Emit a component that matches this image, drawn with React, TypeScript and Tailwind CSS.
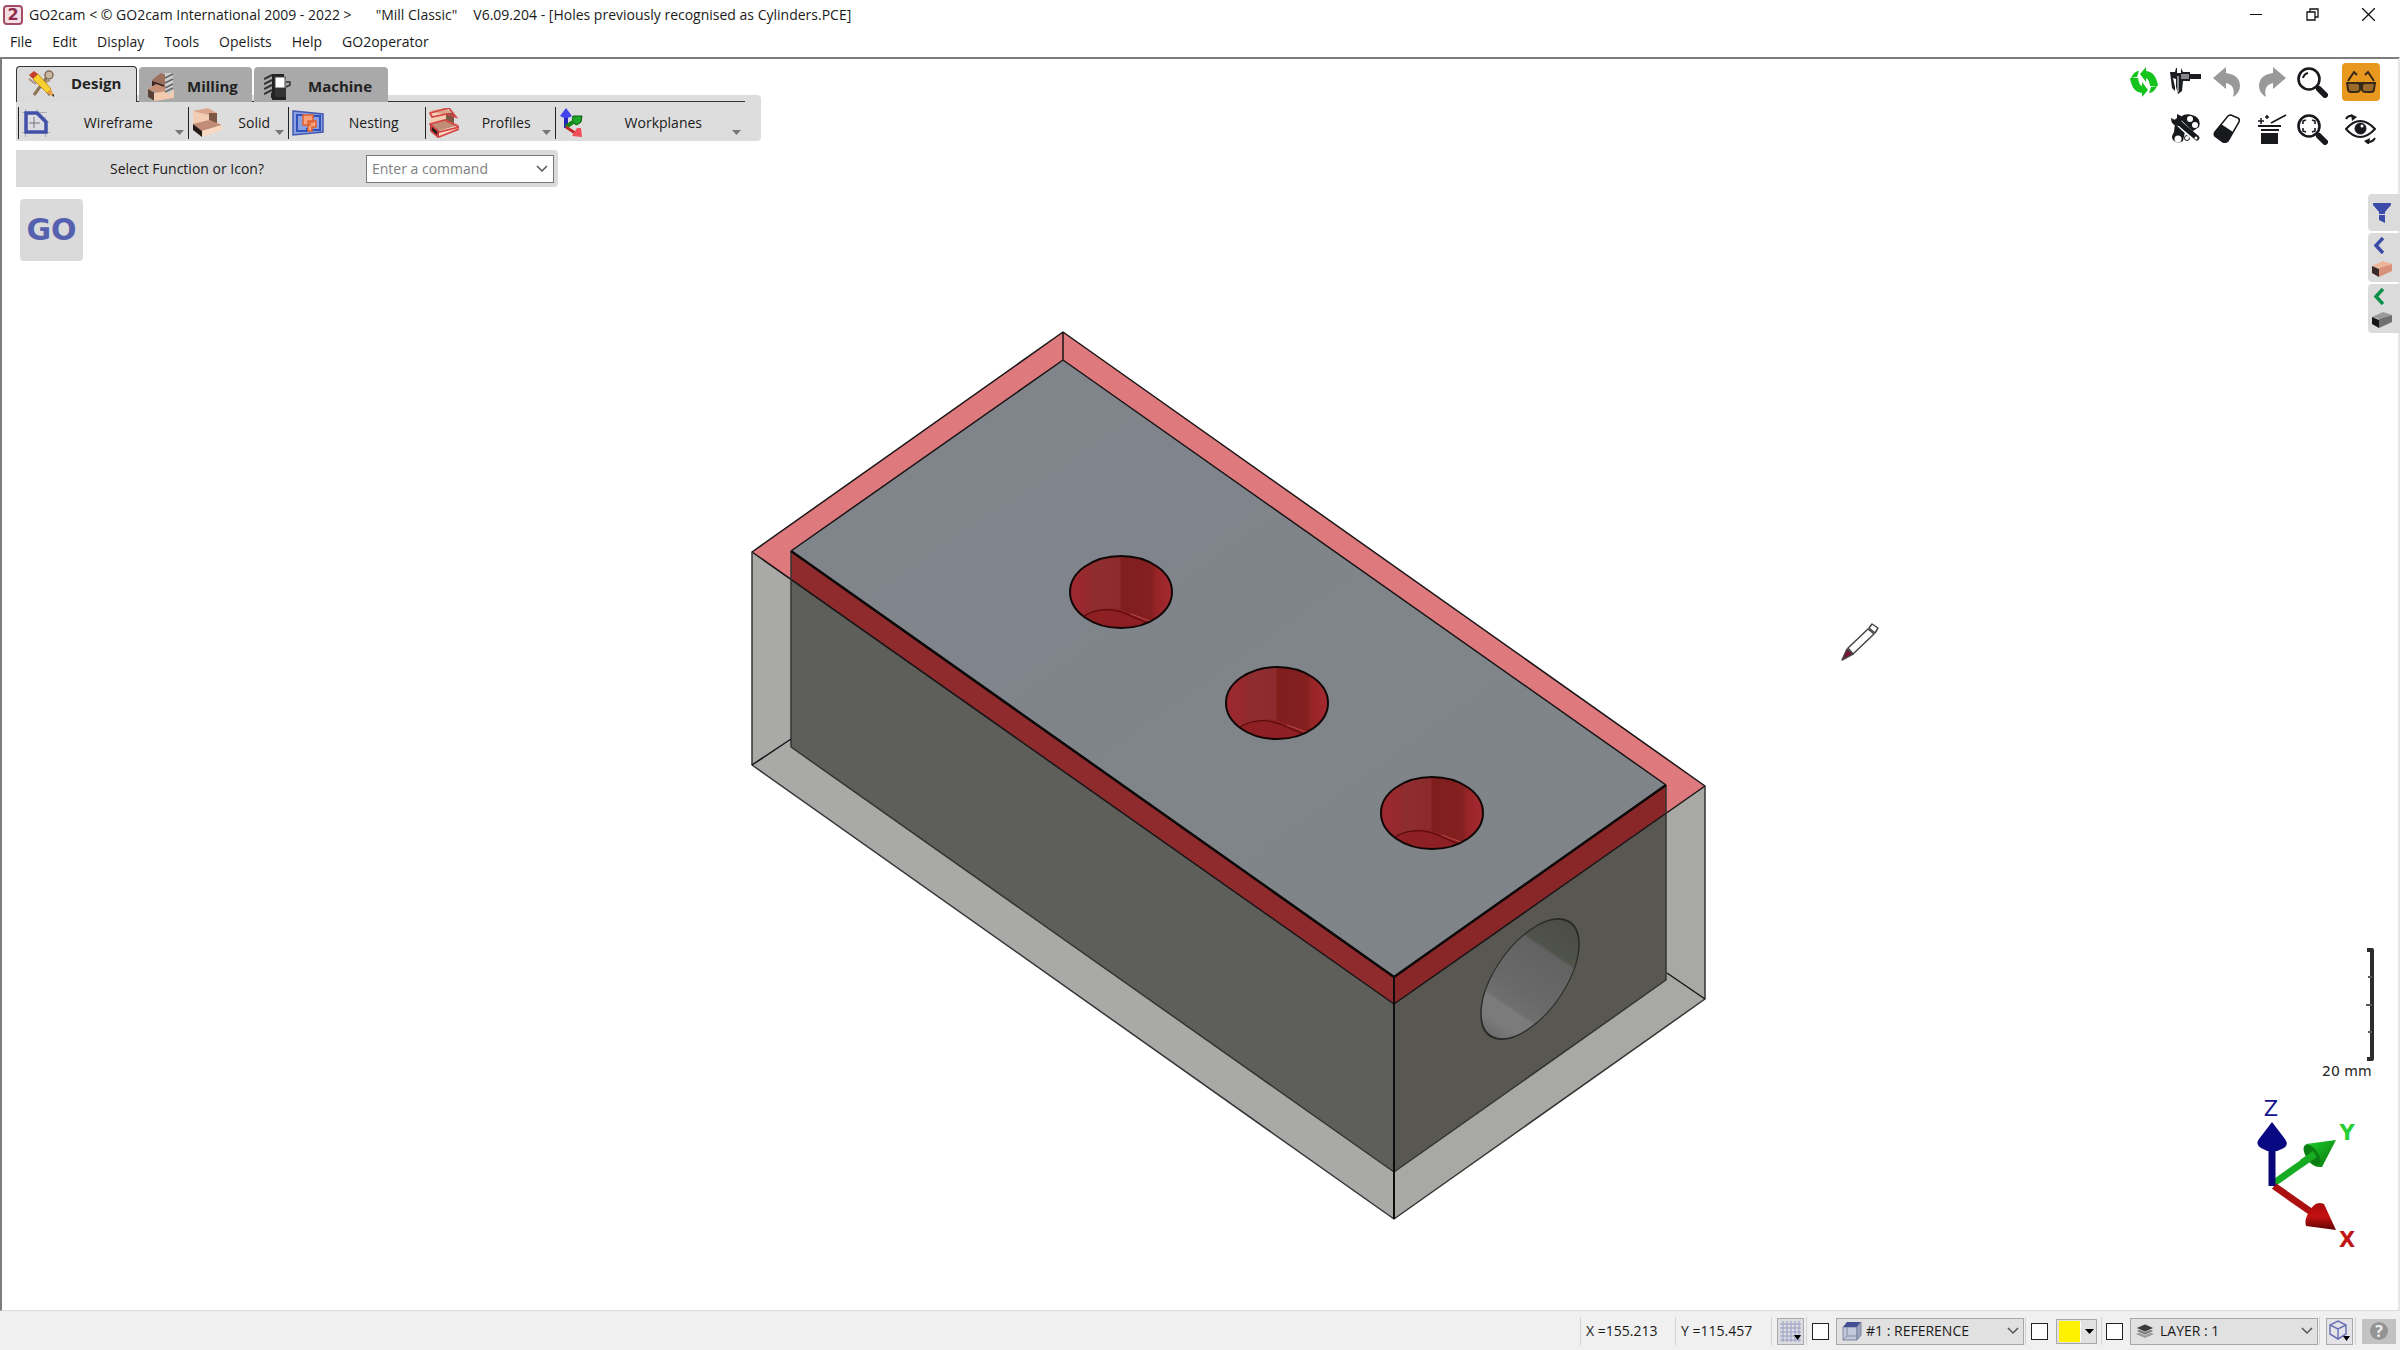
import type { ReactNode } from 'react';

const menus = ['File', 'Edit', 'Display', 'Tools', 'Opelists', 'Help', 'GO2operator'];

const holes = [
  { x: 1121, y: 592 },
  { x: 1277, y: 703 },
  { x: 1432, y: 813 },
];

const PencilCompassIcon = () => (
  <svg className="h-7 w-7" viewBox="0 0 28 28">
    <path d="M23 3 7 25M13 12l10 13" stroke="#8b7355" strokeWidth="3" />
    <circle cx="22" cy="5" r="4" fill="#c8b8a4" stroke="#806a58" strokeWidth="1.5" />
    <path d="M2 9l7 5M15 14l8-4" stroke="#a4907c" strokeWidth="2" />
    <path d="m2 5 5-4 4 3-5 5z" fill="#c4402c" />
    <path d="m6 9 5-5 13 15-4 4z" fill="#f8d030" stroke="#c8921c" strokeWidth="1" />
    <path d="m20 23 4-4 3 8z" fill="#e8a040" />
    <path d="m25 25 2 2v-3z" fill="#222" />
  </svg>
);

const SolidIcon = ({ outline = false }: { outline?: boolean }) => (
  <svg className="h-[30px] w-[30px]" viewBox="0 0 30 30">
    <path d="m1 3 15-2 2 12L1 16z" fill="#f3cdb4" />
    <path d="m1 3 15-3 9 5-8 2z" fill="#dba68c" />
    <path d="m17 5 8 0v11l-8-4z" fill="#7d5847" />
    <path d="m1 16 16-4 13 5-20 6z" fill="#c18d76" />
    <path d="m1 16 9 7v6L1 22z" fill="#241a16" />
    <path d="m10 23 20-6v5l-20 7z" fill="#f8d8c2" />
    {outline && (
      <path d="m1 5 19-5 7 9-9-3-15 3zM1 16l15-4 14 7-20 5zM2 17v6l7 6v-5M10 29l20-8" fill="none" stroke="#d44444" strokeWidth="1.700" />
    )}
  </svg>
);

const MillingIcon = () => (
  <svg className="h-[30px] w-7" viewBox="0 0 28 30">
    <path d="m5 8 9-7 8 4v14L5 12z" fill="#9c705c" />
    <path d="m5 9 12 4v6L5 14z" fill="#3a2822" />
    <path d="m1 17 8-5 17 6-9 5z" fill="#c79076" />
    <path d="m1 17 7 4v8l-7-4z" fill="#5d4035" />
    <path d="m7 21 20-3v8L7 29z" fill="#f4caae" />
    <path d="M18 1h8v18l-4 4-4-4z" fill="#cfcfcf" />
    <path d="m18 6 8-4m-8 9 8-4m-8 9 8-4m-8 8 8-4" stroke="#666" strokeWidth="1.800" />
  </svg>
);

const MachineIcon = () => (
  <svg className="h-7 w-7" viewBox="0 0 28 28">
    <path d="M2 1h18v3H2zM7 1h4v24H7zM8 22h14v5H8z" fill="#222" />
    <path d="M0 1h8v18l-4 5-4-5z" fill="#aaa" />
    <path d="m0 6 8-4m-8 9 8-4m-8 9 8-4m-8 9 8-4" stroke="#333" strokeWidth="2" />
    <rect x="11" y="4" width="10" height="11" fill="#fff" stroke="#444" />
    <path d="M11 15h11v9H11z" fill="#333" />
    <path d="M22 9h4v3l-4 2" fill="none" stroke="#333" strokeWidth="1.5" />
  </svg>
);

const WireframeIcon = () => (
  <svg className="h-7 w-7" viewBox="0 0 28 28">
    <path d="M0 3.500h25M0 23.500h28M3.500 0v28M23.500 8v20M14 0l13 14" stroke="#aab" strokeWidth="1" fill="none" />
    <path d="M4 4h11l9 9v10H4z" fill="#dcdde4" stroke="#4250a8" strokeWidth="3.500" />
    <path d="M7 14h11M12 8v11" stroke="#777" strokeWidth="1" />
  </svg>
);

const NestingIcon = () => (
  <svg className="h-[26px] w-8" viewBox="0 0 32 26">
    <path d="m1 1 30 3v18L1 25z" fill="#8aa0e4" stroke="#4359b0" strokeWidth="1.500" />
    <path d="M12 5H5v16h10v-3M20 6h8v14h-8" fill="none" stroke="#3152bb" strokeWidth="2" />
    <path d="M11 5h10v7h-3v3h-7zM16 11h8v6h-4v4h-4z" fill="#f6a27c" stroke="#e0602e" strokeWidth="1.500" />
  </svg>
);

const WorkplanesIcon = () => (
  <svg className="h-[30px] w-6" viewBox="0 0 24 30">
    <path d="M7 8v12" stroke="#2525c0" strokeWidth="4" />
    <path d="M7 0 1 8q6 4 12 0z" fill="#4444ee" />
    <path d="m7 19 7-5" stroke="#128a12" strokeWidth="4" />
    <path d="m23 8-9 0q-2 5 3 9 3-1 5-3z" fill="#1ca628" stroke="#0a5a10" />
    <path d="m7 19 9 6" stroke="#c02c2c" strokeWidth="3" />
    <path d="m23 29-1-9-4 0-5 8z" fill="#ef4f58" />
  </svg>
);

const RefreshIcon = () => (
  <svg className="h-[30px] w-[30px]" viewBox="0 0 30 30" fill="#14c41c">
    <path d="M11 7 17 0v4q10 1 12 15h-8q-1-7-4-8v4z" />
    <path d="m19 23-6 7v-4Q3 25 1 11h8q1 7 4 8v-4z" />
    <path d="M3 9q3-5 7-5L8 10 2 11zM27 21q-3 5-7 5l2-6 6-1z" />
  </svg>
);

const CaliperIcon = () => (
  <svg className="h-[30px] w-[31px]" viewBox="0 0 31 30" fill="#1b1d20">
    <path d="M0 5h5l1-4h1v5h4V1l2 4h7v9h-7l-1 10-4 3-2-7V12l-3-1 2 9v4l-3-3z" />
    <path d="M19 7h12v5H19z" />
    <path d="M11 7h8v5h-8z" fill="#888" />
    <path d="M8 9v16" stroke="#fff" />
  </svg>
);

const ArrowIcon = ({ flip = false }: { flip?: boolean }) => (
  <svg className={`h-[30px] w-7 ${flip ? '-scale-x-100' : ''}`} viewBox="0 0 28 30" fill="#999">
    <path d="M0 11 13 0v6q14 2 14 13 0 7-7 11 3-12-7-14v6z" />
  </svg>
);

const MagnifierIcon = ({ fit = false }: { fit?: boolean }) => (
  <svg className="h-[31px] w-[31px]" viewBox="0 0 31 31" fill="none" stroke="#17191c">
    <circle cx="12" cy="12" r="10.500" strokeWidth="2.600" />
    <path d="m19 19 3 3" strokeWidth="3" />
    <path d="m22 22 6 6" strokeWidth="6" strokeLinecap="round" />
    {fit ? (
      <path d="M6 10V7l3-1M15 6l3 1v3M18 14v3l-3 1M9 18l-3-1v-3" strokeWidth="1.600" />
    ) : (
      <path d="M6 11q1-4 5-5" strokeWidth="2" />
    )}
  </svg>
);

const GlassesIcon = () => (
  <svg className="h-6 w-[30px]" viewBox="0 0 30 24" fill="none" stroke="#352817">
    <path d="M2 11 8 2l3 3M28 11l-6-9-3 3" strokeWidth="2" />
    <path d="M1 13h13v6q0 3-4 3H5q-3 0-3-3zM16 13h13l-1 6q0 3-3 3h-5q-4 0-4-3z" fill="#9c6a2a" strokeWidth="2" />
    <path d="M12 13.500h6" strokeWidth="3" />
  </svg>
);

const SettingsIcon = () => (
  <svg className="h-[30px] w-[31px]" viewBox="0 0 31 30">
    <path d="M5 9Q12-2 22 1t7 12l-6 4-8 1-2 9q-5 3-9 0t0-9z" fill="#17191c" />
    <circle cx="20" cy="5" r="3" fill="#fff" />
    <circle cx="25" cy="11" r="3" fill="#fff" />
    <circle cx="8" cy="25" r="3.500" fill="#fff" />
    <circle cx="17" cy="24" r="2.500" fill="#fff" stroke="#17191c" />
    <path d="m7 7 19 18" stroke="#fff" strokeWidth="7" strokeLinecap="round" />
    <path d="m7 7 20 17" stroke="#17191c" strokeWidth="5" strokeLinecap="round" />
    <path d="M1 4q0 8 8 8 4-4 2-10l-4-2v6H5z" fill="#17191c" />
    <circle cx="26" cy="24" r="1.500" fill="#fff" />
  </svg>
);

const EraserIcon = () => (
  <svg className="h-[30px] w-7" viewBox="0 0 28 30">
    <path d="M15 2q1-1 3-1l7 3q2 1 1 4L15 27q-2 2-5 1l-7-5q-3-2-1-5z" fill="#fff" stroke="#17191c" strokeWidth="1.500" />
    <path d="m8 10 12 8-5 9q-2 2-5 1l-7-5q-3-2-1-5z" fill="#17191c" />
  </svg>
);

const MagicIcon = () => (
  <svg className="h-[30px] w-[30px]" viewBox="0 0 30 30" fill="#17191c">
    <path d="M1 11h23v2H1zM4 15h18v2H4zM4 19h17v11H4z" />
    <path d="m14 9 15-8" stroke="#17191c" strokeWidth="1.800" />
    <path d="M4 4v6M1 7h6M10 1v4M8 3h4" stroke="#17191c" strokeWidth="1.500" />
  </svg>
);

const EyeIcon = () => (
  <svg className="h-[30px] w-[31px]" viewBox="0 0 31 30" fill="none" stroke="#17191c">
    <path d="M1 15Q15-1 30 15 15 31 1 15z" strokeWidth="2" />
    <circle cx="15.500" cy="14.500" r="5.500" fill="#17191c" />
    <circle cx="17" cy="12" r="1.500" fill="#fff" stroke="none" />
    <path d="M1 5q2-4 7-3M30 24q-2 4-7 4" strokeWidth="2" />
    <path d="m6 0 6 3-5 4zM25 24l-6 3 5 4z" fill="#17191c" stroke="none" />
  </svg>
);

const Chevron = () => (
  <svg className="pointer-events-none h-2 w-3" viewBox="0 0 12 8" fill="none" stroke="#555" strokeWidth="1.500">
    <path d="m1 1 5 5 5-5" />
  </svg>
);

const BlockIcon = ({ top, left, front }: { top: string; left: string; front: string }) => (
  <svg className="h-[18px] w-[22px]" viewBox="0 0 22 18">
    <path d="m1 6 11-5 9 3-13 4z" fill={top} />
    <path d="m1 6 7 3v8l-7-4z" fill={left} />
    <path d="m8 8 13-4v7L8 17z" fill={front} />
  </svg>
);

const CubeIcon = () => (
  <svg className="h-5 w-5" viewBox="0 0 20 20">
    <path d="M1 6h14v13H1z" fill="#c4c8dc" stroke="#7d849f" />
    <path d="M1 6 5 1h14l-4 5z" fill="#444f95" />
    <path d="m15 6 4-5v13l-4 5z" fill="#9ca3bd" stroke="#7d849f" />
    <path d="M5 6v9h10M5 15l-4 4" fill="none" stroke="#858ca6" />
  </svg>
);

interface ToolItem {
  label: string;
  icon: ReactNode;
  width: string;
  arrow: boolean;
}

const tools: ToolItem[] = [
  { label: 'Wireframe', icon: <WireframeIcon />, width: 'w-[171px]', arrow: true },
  { label: 'Solid', icon: <SolidIcon />, width: 'w-[101px]', arrow: true },
  { label: 'Nesting', icon: <NestingIcon />, width: 'w-[138px]', arrow: false },
  { label: 'Profiles', icon: <SolidIcon outline />, width: 'w-[131px]', arrow: true },
  { label: 'Workplanes', icon: <WorkplanesIcon />, width: 'w-[192px]', arrow: true },
];

const viewTools: { label: string; icon: ReactNode; style?: string }[] = [
  { label: 'Refresh', icon: <RefreshIcon /> },
  { label: 'Measure', icon: <CaliperIcon /> },
  { label: 'Undo', icon: <ArrowIcon /> },
  { label: 'Redo', icon: <ArrowIcon flip /> },
  { label: 'Zoom', icon: <MagnifierIcon /> },
  { label: 'Visibility', icon: <GlassesIcon />, style: 'w-[38px] rounded-sm bg-[#e8981e]' },
  { label: 'Settings', icon: <SettingsIcon />, style: 'col-start-2' },
  { label: 'Delete', icon: <EraserIcon /> },
  { label: 'Magic', icon: <MagicIcon /> },
  { label: 'Zoom all', icon: <MagnifierIcon fit /> },
  { label: 'Views', icon: <EyeIcon /> },
];

function Viewport() {
  return (
    <svg className="absolute inset-0 h-full w-full" viewBox="2 59 2396 1251" strokeLinejoin="round">
      <defs>
        <linearGradient id="bore">
          <stop offset="0" stopColor="#a02831" />
          <stop offset=".21" stopColor="#922a2d" />
          <stop offset=".22" stopColor="#8f2e30" />
          <stop offset=".49" stopColor="#8c2b2d" />
          <stop offset=".5" stopColor="#7f1e1d" />
          <stop offset=".8" stopColor="#84201f" />
          <stop offset=".84" stopColor="#962427" />
          <stop offset="1" stopColor="#a52a31" />
        </linearGradient>
        <linearGradient id="face" x1="0" y1="0" x2="1" y2="1">
          <stop offset="0" stopColor="#80858a" />
          <stop offset=".35" stopColor="#80848c" />
          <stop offset=".55" stopColor="#7f8588" />
          <stop offset="1" stopColor="#80848b" />
        </linearGradient>
        <linearGradient id="cross" gradientUnits="userSpaceOnUse" x1="40" y1="-29" x2="-40" y2="29">
          <stop offset="0" stopColor="#4b4d46" />
          <stop offset=".25" stopColor="#50534a" />
          <stop offset=".27" stopColor="#626262" />
          <stop offset=".6" stopColor="#696969" />
          <stop offset=".74" stopColor="#6f6f6f" />
          <stop offset=".76" stopColor="#7b7b7b" />
          <stop offset=".88" stopColor="#7b7b7b" />
          <stop offset="1" stopColor="#6c6c6c" />
        </linearGradient>
        <linearGradient id="coneY" x1="0" y1="0" x2="1" y2="1">
          <stop offset="0" stopColor="#21d32d" />
          <stop offset="1" stopColor="#08720e" />
        </linearGradient>
        <linearGradient id="coneX" x1="0" y1="0" x2="0" y2="1">
          <stop offset="0" stopColor="#a80c0c" />
          <stop offset=".5" stopColor="#c31010" />
          <stop offset="1" stopColor="#5f0404" />
        </linearGradient>
      </defs>

      {/* stock */}
      <path d="M752 552 1394 1004V1219L752 765z" fill="#a9a9a8" />
      <path d="M1394 1004 1705 786V999L1394 1219z" fill="#a8a8a5" />
      <path d="M1063 332 1705 786 1394 1004 752 552z" fill="#de797d" />

      {/* part */}
      <path d="M791 551 1394 977V1172L791 747z" fill="#5e5e5b" />
      <path d="M1394 977 1666 785V980L1394 1172z" fill="#595751" />
      <path d="M791 551 1394 977V1004L791 579z" fill="#8f2a2d" />
      <path d="M1394 977 1666 785V813L1394 1004z" fill="#882628" />
      <path d="M1063 360 1666 785 1394 977 791 551z" fill="url(#face)" />

      <g fill="none" stroke="#191516" strokeWidth="1.500">
        <path d="M1063 332 1705 786 1394 1004 752 552zM1063 332v28L1666 785M1063 360 791 551" />
        <path d="M752 552V765L1394 1219 1705 999V786M791 551V747L1394 1172 1666 980V785" stroke="#343434" />
        <path d="m752 765 39-26M1705 999l-38-26" />
        <path d="M791 551 1394 977 1666 785" stroke="#0c0808" strokeWidth="2.500" />
        <path d="M1394 977V1219" stroke="#0c0c0c" strokeWidth="2" />
      </g>

      {holes.map((hole) => (
        <g key={hole.x} transform={`translate(${hole.x} ${hole.y})`}>
          <ellipse rx="51" ry="36" fill="url(#bore)" />
          <path d="M-37 25Q-10 8 15 24L28 29Q-4 45-37 25z" fill="#8e1f22" />
          <path d="M-37 24C-20 14-4 17 10 24L26 31" fill="none" stroke="#5c0b0d" strokeWidth="1.200" />
          <path d="m10 22 19 7" stroke="#b5494a" />
          <ellipse rx="51" ry="36" fill="none" stroke="#100606" strokeWidth="2" />
        </g>
      ))}

      <circle r="49" transform="matrix(1 -.707 0 1 1530 979)" fill="url(#cross)" stroke="#2a2b28" strokeWidth="1.500" />

      {/* pencil cursor */}
      <g fill="#fff" stroke="#444" strokeWidth="1.500">
        <path d="m1848 648 20-19 6 5-21 20z" />
        <path d="m1869 628 3-4 6 4-3 5z" />
        <path d="m1842 660 5-11 6 5z" fill="#7c1230" />
      </g>

      {/* scale */}
      <path d="M2367 950h5v109h-5" fill="none" stroke="#2c2c2c" strokeWidth="4" />
      <path d="M2368 977h4M2366 1005h6M2368 1032h4" stroke="#555" strokeWidth="2" />
      <text x="2322" y="1076" fontSize="14" fill="#222" className="font-[DejaVu_Sans,sans-serif]">20 mm</text>

      {/* axis triad */}
      <path d="m2274 1183 40-28" stroke="#16ab20" strokeWidth="7" />
      <path d="M2336 1140 2306 1144Q2303 1152 2308 1160T2322 1167z" fill="url(#coneY)" />
      <ellipse cx="2312" cy="1155" rx="6" ry="12" transform="rotate(-35 2312 1155)" fill="#0b7d13" />
      <path d="m2302 1163 13-9" stroke="#16ab20" strokeWidth="7" />
      <path d="m2274 1186 40 28" stroke="#ad1010" strokeWidth="7" />
      <path d="M2336 1230 2324 1204Q2315 1200 2309 1212 2304 1220 2306 1226z" fill="url(#coneX)" />
      <path d="M2272 1147v39" stroke="#080878" strokeWidth="7" />
      <path d="m2272 1122 13 17q4 6-1 9-12 7-23 0-6-4-2-9z" fill="#080882" />
      <g fontSize="21" className="font-[DejaVu_Sans,sans-serif]" textAnchor="middle">
        <text x="2271" y="1116" fill="#12128c">Z</text>
        <text x="2347" y="1140" fill="#28cf35" fontWeight="bold">Y</text>
        <text x="2347" y="1247" fill="#c01616" fontWeight="bold">X</text>
      </g>
    </svg>
  );
}

function TitleBar() {
  return (
    <header className="bg-white">
      <div className="flex h-[29px] items-center pl-[3px]">
        <span className="flex size-5 items-center justify-center rounded border-2 border-[#a34c66] bg-[#f4dfe5] font-[DejaVu_Sans,sans-serif] text-base leading-4 font-bold text-[#8d2c4c]">2</span>
        <h1 className="ml-1.5 flex whitespace-pre">
          <span>GO2cam &lt; © GO2cam International 2009 - 2022 &gt;</span>
          <span className="ml-6">"Mill Classic"</span>
          <span className="ml-4">V6.09.204 - [Holes previously recognised as Cylinders.PCE]</span>
        </h1>
        <div className="ml-auto flex pr-1">
          <button aria-label="Minimize" className="flex h-7 w-14 items-center justify-center">
            <svg className="size-3" viewBox="0 0 12 12"><path d="M0 5.500h12" stroke="#111" /></svg>
          </button>
          <button aria-label="Restore" className="flex h-7 w-14 items-center justify-center">
            <svg className="size-[13px]" viewBox="0 0 13 13" fill="none" stroke="#111" strokeWidth="1.300"><path d="M1 4h8v8H1zM4 4V1h8v8H9" /></svg>
          </button>
          <button aria-label="Close" className="flex h-7 w-14 items-center justify-center">
            <svg className="size-[13px]" viewBox="0 0 13 13" stroke="#111" strokeWidth="1.300"><path d="m0 0 13 13M13 0 0 13" /></svg>
          </button>
        </div>
      </div>
      <nav className="flex h-7 items-center gap-5 pb-0.5 pl-2.5">
        {menus.map((menu) => (
          <button key={menu}>{menu}</button>
        ))}
      </nav>
    </header>
  );
}

function Ribbon() {
  return (
    <div className="w-[745px]">
      <div className="relative z-10 flex h-9 items-end gap-0.5 text-[15px] font-bold text-[#222]" role="tablist">
        <button role="tab" aria-selected="true" className="flex h-full w-[121px] items-center gap-4 rounded-t border border-b-0 border-[#333] bg-[#dcdbdc] pb-0.5 pl-2.5">
          <PencilCompassIcon />
          Design
        </button>
        <button role="tab" aria-selected="false" className="flex h-[35px] w-[113px] items-center gap-3 rounded-t bg-[#a9a9a9] pt-1 pl-2">
          <MillingIcon />
          Milling
        </button>
        <button role="tab" aria-selected="false" className="flex h-[35px] w-[134px] items-center gap-4 rounded-t bg-[#a9a9a9] pt-1 pl-2.5">
          <MachineIcon />
          Machine
        </button>
      </div>
      <div className="-mt-[7px] h-[46px] rounded-r bg-[#dedddd] pt-1.5 pr-4">
        <div className="ml-[121px] h-px bg-[#333]" />
        <div className="mt-[5px] ml-0.5 flex h-8">
          {tools.map((tool) => (
            <button key={tool.label} className={`flex items-center border-l border-[#222] pl-[3px] ${tool.width}`}>
              {tool.icon}
              <span className="flex-1 pl-3 text-center">{tool.label}</span>
              <svg className={`mr-1 mb-1 h-[5px] w-[9px] self-end ${tool.arrow ? '' : 'invisible'}`} viewBox="0 0 9 5">
                <path d="M0 0h9L4.500 5z" fill="#777" />
              </svg>
            </button>
          ))}
        </div>
      </div>
    </div>
  );
}

function SidePanel() {
  return (
    <div className="-mr-0.5 flex w-8 flex-col gap-0.5">
      <button aria-label="Filter" className="flex h-[37px] items-center justify-center rounded-l-sm bg-[#dcdbdc] pr-1">
        <svg className="h-5 w-[18px]" viewBox="0 0 18 20" fill="#3c4ba8"><path d="M0 0h18v2l-6 7v2H6V9L0 2zM6 12h6v8l-6-3z" /></svg>
      </button>
      <button aria-label="Part" className="flex h-[49px] flex-col items-center gap-1.5 rounded-l-sm bg-[#dcdbdc] pt-1 pr-1">
        <svg className="mr-2 h-[17px] w-[11px]" viewBox="0 0 11 17" fill="none" stroke="#3c4ba8" strokeWidth="3.500"><path d="M10 1 3 8.500 10 16" /></svg>
        <BlockIcon top="#f0b498" left="#3c2a24" front="#d8917a" />
      </button>
      <button aria-label="Stock" className="flex h-[49px] flex-col items-center gap-1.5 rounded-l-sm bg-[#dcdbdc] pt-1 pr-1">
        <svg className="mr-2 h-[17px] w-[11px]" viewBox="0 0 11 17" fill="none" stroke="#0c9048" strokeWidth="3.500"><path d="M10 1 3 8.500 10 16" /></svg>
        <BlockIcon top="#9a9a9a" left="#161616" front="#707070" />
      </button>
    </div>
  );
}

const Checkbox = ({ label }: { label: string }) => (
  <input type="checkbox" aria-label={label} className="size-[17px] shrink-0 appearance-none border border-[#222] bg-white" />
);

const StatusSelect = ({ label, value, icon }: { label: string; value: string; icon: ReactNode }) => (
  <div className="relative flex items-center">
    <span className="pointer-events-none absolute left-1.5">{icon}</span>
    <select aria-label={label} className="h-[27px] w-[188px] appearance-none border border-[#a8a8a8] bg-[#e1e1e1] pl-[29px] whitespace-pre">
      <option>{value}</option>
    </select>
    <span className="pointer-events-none absolute right-[5px]">
      <Chevron />
    </span>
  </div>
);

function StatusBar() {
  return (
    <footer className="flex h-[39px] items-center justify-end bg-[#f0f0f0] pt-px pr-1">
      <div className="flex h-7 w-[95px] items-center border-l border-[#d4d4d4] pl-[5px]">X =155.213</div>
      <div className="flex h-7 w-24 items-center border-l border-[#d4d4d4] pl-[5px]">Y =115.457</div>
      <div className="flex h-7 w-[35px] items-center border-l border-[#d4d4d4] pl-[5px]">
        <button aria-label="Grid" className="border border-[#aaa] bg-[#dcdce0] p-px">
          <svg className="size-[23px]" viewBox="0 0 23 23">
            <path d="M4 1v21M8 1v21M12 1v21M16 1v21M20 1v21M1 4h21M1 8h21M1 12h21M1 16h21M1 20h21" stroke="#979dc4" />
            <path d="M15 15h7l-3.500 5z" />
          </svg>
        </button>
      </div>
      <div className="flex h-7 w-[219px] items-center gap-[7px] border-l border-[#d4d4d4] pl-[5px]">
        <Checkbox label="Lock workplane" />
        <StatusSelect label="Workplane" value="#1 : REFERENCE" icon={<CubeIcon />} />
      </div>
      <div className="flex h-7 w-[76px] items-center gap-2 border-l border-[#d4d4d4] pl-[5px]">
        <Checkbox label="Lock color" />
        <button aria-label="Color" className="flex h-[25px] w-[41px] items-center border border-[#a8a8a8] bg-[#e1e1e1] pl-0.5">
          <span className="h-[21px] w-[22px] border-r border-white bg-[#fff200]" />
          <svg className="ml-1 h-[5px] w-[9px]" viewBox="0 0 9 5"><path d="M0 0h9L4.500 5z" /></svg>
        </button>
      </div>
      <div className="flex h-7 w-[218px] items-center gap-[7px] border-l border-[#d4d4d4] pl-1">
        <Checkbox label="Lock layer" />
        <StatusSelect
          label="Layer"
          value="LAYER :  1"
          icon={
            <svg className="h-4 w-[18px]" viewBox="0 0 18 16">
              <path d="m0 11 9 4 9-4-9-4z" fill="#9a9a9a" />
              <path d="m0 8 9 4 9-4-9-4z" fill="#777" stroke="#e1e1e1" strokeWidth=".8" />
              <path d="m0 5 9 4 9-4-9-4z" fill="#3c3c3c" stroke="#e1e1e1" strokeWidth=".8" />
            </svg>
          }
        />
      </div>
      <div className="flex h-7 w-9 items-center border-l border-[#d4d4d4] pl-1.5">
        <button aria-label="Display mode" className="border border-[#aaa] bg-[#e4e4e8] p-px">
          <svg className="size-[23px]" viewBox="0 0 23 23" fill="none" stroke="#6b73b5" strokeWidth="1.500">
            <path d="m10 1 8 4v9l-8 5-8-5V5zM2 5l8 4 8-4M10 9v10" />
            <path d="M15 16h7l-3.500 5z" fill="#000" stroke="none" />
          </svg>
        </button>
      </div>
      <div className="flex h-7 items-center border-l border-[#d4d4d4] pl-1.5">
        <button aria-label="Help" className="flex h-[25px] w-[34px] items-center justify-center bg-[#c2c2c2]">
          <span className="flex size-[18px] items-center justify-center rounded-full bg-[#949494] text-base leading-4 font-bold text-[#eee]">?</span>
        </button>
      </div>
    </footer>
  );
}

export default function App() {
  return (
    <div className="flex min-h-screen flex-col bg-white font-[Open_Sans,sans-serif] text-sm text-[#1a1a1a]">
      <TitleBar />
      <main className="relative flex-1 border-t-2 border-r-2 border-b border-l-2 border-t-[#7d7d7d] border-r-[#e6e6e6] border-b-[#dcdcdc] border-l-[#7d7d7d]">
        <Viewport />
        <div className="relative flex justify-between">
          <div className="pt-[7px] pl-3.5">
            <Ribbon />
            <div className="mt-[9px] flex h-[37px] w-[542px] items-center rounded-r bg-[#dbdadb] pt-px pr-1">
              <label htmlFor="command" className="flex-1 pr-2 text-center">Select Function or Icon?</label>
              <div className="flex h-7 w-[188px] items-center border border-[#777] bg-white pr-[5px]">
                <input id="command" placeholder="Enter a command" className="min-w-0 flex-1 pl-[5px] placeholder:text-[#808080]" />
                <Chevron />
              </div>
            </div>
            <button className="mt-3 ml-1 flex h-[62px] w-[63px] items-center justify-center rounded-sm bg-[#dbdadb] font-[DejaVu_Sans,sans-serif] text-3xl font-bold text-[#5560ae]">
              GO
            </button>
          </div>
          <div className="flex flex-col items-end gap-[46px] pt-1">
            <div className="mr-[7px] grid grid-cols-[44px_38px_45px_46px_35px_61px] justify-items-center gap-y-[9px]">
              {viewTools.map((tool) => (
                <button key={tool.label} aria-label={tool.label} className={`flex h-[38px] items-center justify-center ${tool.style ?? ''}`}>
                  {tool.icon}
                </button>
              ))}
            </div>
            <SidePanel />
          </div>
        </div>
      </main>
      <StatusBar />
    </div>
  );
}
